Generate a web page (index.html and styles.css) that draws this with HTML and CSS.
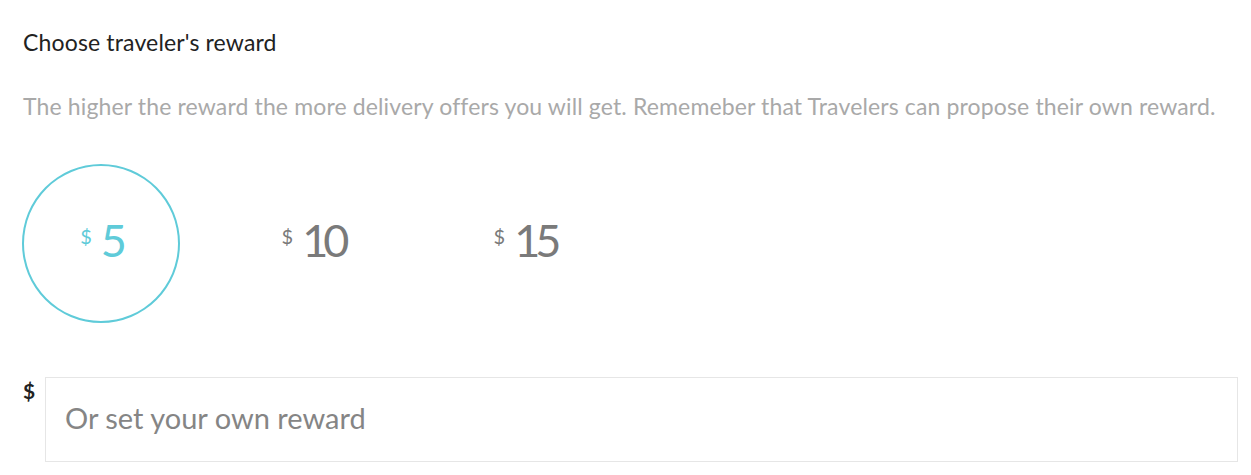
FILE: index.html
```html
<!DOCTYPE html>
<html>
<head>
<meta charset="utf-8">
<link rel="stylesheet" href="styles.css">
</head>
<body>
<div class="reward">
  <h2 class="title">Choose traveler's reward</h2>
  <p class="hint">The higher the reward the more delivery offers you will get. Rememeber that Travelers can propose their own reward.</p>
  <div class="options">
    <div class="option selected"><span class="cur">$</span><span class="amt">5</span></div>
    <div class="option"><span class="cur">$</span><span class="amt">10</span></div>
    <div class="option"><span class="cur">$</span><span class="amt">15</span></div>
  </div>
  <div class="custom">
    <span class="dollar">$</span>
    <input class="field" type="text" placeholder="Or set your own reward">
  </div>
</div>
</body>
</html>
```

FILE: styles.css
```css
html, body {
  margin: 0;
  padding: 0;
  background: #fff;
}
body {
  font-family: Lato, "Open Sans", sans-serif;
}
.reward {
  padding: 28px 13px 0 23px;
}
.title {
  margin: 0;
  font-size: 23px;
  font-weight: 400;
  line-height: 28px;
  letter-spacing: 0.15px;
  color: #222;
}
.hint {
  margin: 36px 0 0;
  font-size: 23px;
  line-height: 28px;
  letter-spacing: 0.14px;
  color: #a9a9a9;
}
.options {
  display: flex;
  gap: 54px;
  margin-top: 44px;
  margin-left: -1px;
}
.option {
  width: 158px;
  height: 159px;
  box-sizing: border-box;
  border-radius: 50%;
  border: 2px solid transparent;
  display: flex;
  align-items: center;
  justify-content: center;
  color: #7a7a7a;
  padding-bottom: 8px;
}
.option.selected {
  border-color: #5fcbd9;
  color: #5fcbd9;
}
.cur {
  font-size: 20px;
  margin-top: -8px;
  margin-right: 9px;
}
.amt {
  font-size: 45px;
  line-height: 1;
  letter-spacing: -5px;
  margin-top: 2px;
}
.custom {
  display: flex;
  align-items: flex-start;
  margin-top: 54px;
}
.dollar {
  width: 22px;
  font-size: 21px;
  font-weight: 700;
  color: #222;
  margin-top: 1px;
}
.field {
  flex: 1;
  height: 85px;
  box-sizing: border-box;
  border: 1px solid #e6e6e6;
  padding: 0 19px 5px;
  font-family: inherit;
  font-size: 29px;
  color: #444;
  outline: none;
}
.field::placeholder {
  color: #858585;
}
```
